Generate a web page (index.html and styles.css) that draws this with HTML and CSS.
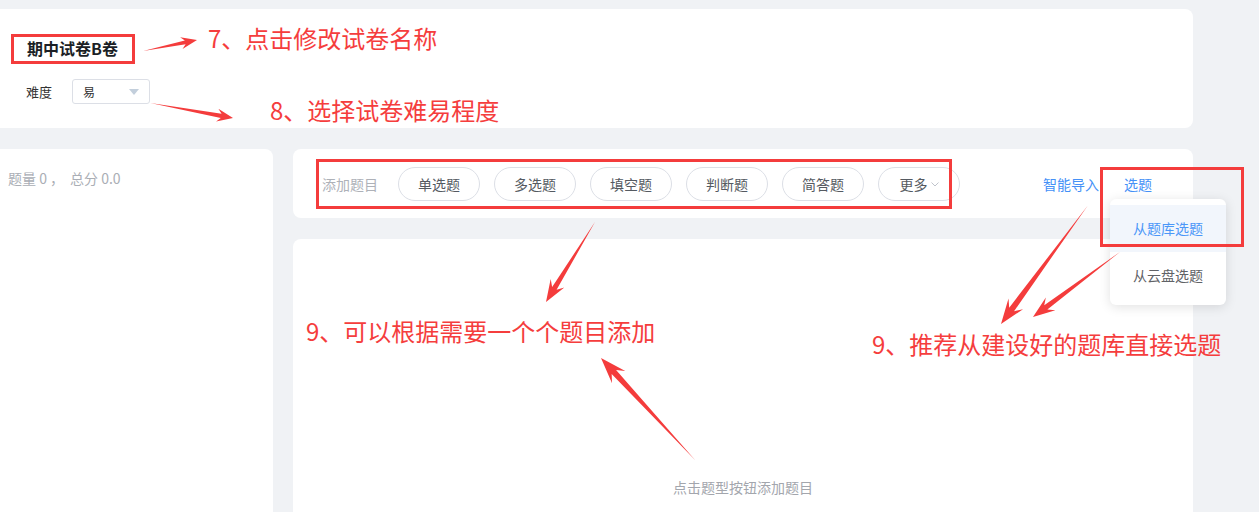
FILE: index.html
```html
<!DOCTYPE html>
<html lang="zh-CN">

<head>
    <meta charset="UTF-8">
    <title>编辑试卷</title>
    <link rel="stylesheet" href="styles.css">
</head>

<body>
<div class="page">
    <!-- Paper header -->
    <div class="header-card">
        <div class="paper-title">期中试卷B卷</div>
        <div class="level-row">
            <span class="level-label">难度</span>
            <div class="level-select">
                <span>易</span>
                <i class="select-caret"></i>
            </div>
        </div>
    </div>

    <div class="main-row">
        <!-- Summary -->
        <div class="side-panel">
            <span>题量 0 ，</span><span class="total">总分 0.0</span>
        </div>

        <div class="right-col">
            <!-- Question type buttons -->
            <div class="toolbar-card">
                <span class="add-label">添加题目</span>
                <div class="type-buttons">
                    <button class="type-btn">单选题</button>
                    <button class="type-btn">多选题</button>
                    <button class="type-btn">填空题</button>
                    <button class="type-btn">判断题</button>
                    <button class="type-btn">简答题</button>
                    <button class="type-btn">更多<svg class="chevron" width="8" height="5" viewBox="0 0 8 5"><polyline points="0.5,0.5 4,4 7.5,0.5" fill="none" stroke="#c0c4cc" stroke-width="1"/></svg></button>
                </div>
                <div class="links">
                    <a class="link">智能导入</a>
                    <a class="link">选题</a>
                </div>
            </div>

            <div class="content-card">
                <p class="empty-tip">点击题型按钮添加题目</p>
            </div>
        </div>
    </div>
</div>

<!-- Pick menu -->
<ul class="pick-menu">
    <li class="pick-item active">从题库选题</li>
    <li class="pick-item">从云盘选题</li>
</ul>

<!-- Annotations -->
<div class="annot">
    <div class="mark mark-title"></div>
    <div class="mark mark-toolbar"></div>
    <div class="mark mark-pick"></div>

    <div class="note note-7">7、点击修改试卷名称</div>
    <div class="note note-8">8、选择试卷难易程度</div>
    <div class="note note-9a">9、可以根据需要一个个题目添加</div>
    <div class="note note-9b">9、推荐从建设好的题库直接选题</div>

    <svg class="arrows" width="1259" height="512" viewBox="0 0 1259 512">
        <g fill="#f43c3c">
            <polygon transform="translate(197,40) rotate(-11.5)" points="0,0 -16,-6 -12,-2 -55,0 -12,2 -16,6"/>
            <polygon transform="translate(233,118) rotate(10.2)" points="0,0 -16,-6.5 -12,-2.2 -84,0 -12,2.2 -16,6.5"/>
            <polygon transform="translate(546,302) rotate(121.5)" points="0,0 -22,-8 -16,-2.6 -94,0 -16,2.6 -22,8"/>
            <polygon transform="translate(601,358) rotate(-132.7)" points="0,0 -26,-9 -19,-3 -139,0 -19,3 -26,9"/>
            <polygon transform="translate(1001,324) rotate(126.2)" points="0,0 -25,-9 -18,-3 -147,0 -18,3 -25,9"/>
            <polygon transform="translate(1033,317) rotate(143.2)" points="0,0 -22,-8 -16,-2.6 -109,0 -16,2.6 -22,8"/>
        </g>
    </svg>
</div>
</body>

</html>
```
FILE: styles.css
```css
* {
    box-sizing: border-box;
}

body {
    margin: 0;
    height: 512px;
    overflow: hidden;
    position: relative;
    background: #f0f2f5;
    font-family: "Noto Sans CJK SC", "Noto Sans", sans-serif;
    color: #333;
}

.page {
    width: 1213px;
    margin-left: -20px;
    padding-top: 9px;
    display: flex;
    flex-direction: column;
    gap: 21px;
}

/* header */
.header-card {
    height: 119px;
    background: #fff;
    border-radius: 8px;
    padding: 25px 0 0 31px;
}

.paper-title {
    display: inline-block;
    height: 29px;
    line-height: 29px;
    padding: 0 16px;
    font-size: 16px;
    font-weight: bold;
    color: #1b1f26;
}

.level-row {
    display: flex;
    align-items: center;
    margin-top: 16px;
    padding-left: 15px;
    height: 25px;
}

.level-label {
    font-size: 13px;
    color: #333;
    width: 46px;
}

.level-select {
    position: relative;
    width: 78px;
    height: 25px;
    border: 1px solid #dcdfe6;
    border-radius: 3px;
    font-size: 12px;
    line-height: 23px;
    padding-left: 10px;
    color: #333;
}

.select-caret {
    position: absolute;
    right: 10px;
    top: 9px;
    width: 0;
    height: 0;
    border-left: 5px solid transparent;
    border-right: 5px solid transparent;
    border-top: 6px solid #c3cfdc;
}

/* main */
.main-row {
    display: flex;
    gap: 20px;
}

.side-panel {
    width: 293px;
    height: 400px;
    background: #fff;
    border-radius: 8px;
    padding: 19px 0 0 28px;
    font-size: 14px;
    line-height: 20px;
    color: #aaaeb5;
}

.side-panel .total {
    margin-left: 6px;
}

.right-col {
    width: 900px;
    display: flex;
    flex-direction: column;
    gap: 21px;
}

.toolbar-card {
    height: 69px;
    background: #fff;
    border-radius: 8px;
    display: flex;
    align-items: center;
    padding: 0 41px 0 29px;
}

.add-label {
    font-size: 14px;
    color: #aeb1b8;
    margin-right: 20px;
}

.type-buttons {
    display: flex;
    gap: 14px;
}

.type-btn {
    width: 82px;
    height: 34px;
    border: 1px solid #dcdfe6;
    border-radius: 17px;
    background: #fff;
    font-family: inherit;
    font-size: 14px;
    color: #555a61;
    display: flex;
    align-items: center;
    justify-content: center;
    padding: 0;
}

.chevron {
    margin-left: 3px;
    margin-top: 2px;
}

.links {
    margin-left: auto;
    display: flex;
    gap: 25px;
}

.link {
    font-size: 14px;
    color: #4591f7;
}

.content-card {
    height: 300px;
    background: #fff;
    border-radius: 8px;
    padding-top: 240px;
    text-align: center;
}

.empty-tip {
    margin: 0;
    font-size: 14px;
    line-height: 16px;
    color: #a3a6ad;
}

/* pick menu */
.pick-menu {
    position: absolute;
    left: 1110px;
    top: 199px;
    width: 116px;
    margin: 0;
    padding: 6px 0;
    list-style: none;
    background: #fff;
    border-radius: 6px;
    box-shadow: 0 2px 12px rgba(0, 0, 0, 0.12);
}

.pick-item {
    height: 47px;
    line-height: 47px;
    text-align: center;
    font-size: 14px;
    color: #606266;
}

.pick-item.active {
    background: #f2f6fc;
    color: #4b97f8;
}

/* annotations */
.annot {
    position: absolute;
    left: 0;
    top: 0;
    width: 1259px;
    height: 512px;
    pointer-events: none;
}

.arrows {
    position: absolute;
    left: 0;
    top: 0;
}

.mark {
    position: absolute;
    border: 3px solid #f43c3c;
}

.mark-title {
    left: 11px;
    top: 34px;
    width: 124px;
    height: 30px;
}

.mark-toolbar {
    left: 316px;
    top: 159px;
    width: 636px;
    height: 50px;
}

.mark-pick {
    left: 1100px;
    top: 167px;
    width: 144px;
    height: 80px;
}

.note {
    position: absolute;
    font-size: 24px;
    line-height: 28px;
    color: #f53d3d;
    white-space: nowrap;
}

.note-7 {
    left: 208px;
    top: 24px;
}

.note-8 {
    left: 270px;
    top: 96px;
}

.note-9a {
    left: 306px;
    top: 317px;
}

.note-9b {
    left: 872px;
    top: 330px;
}
```
